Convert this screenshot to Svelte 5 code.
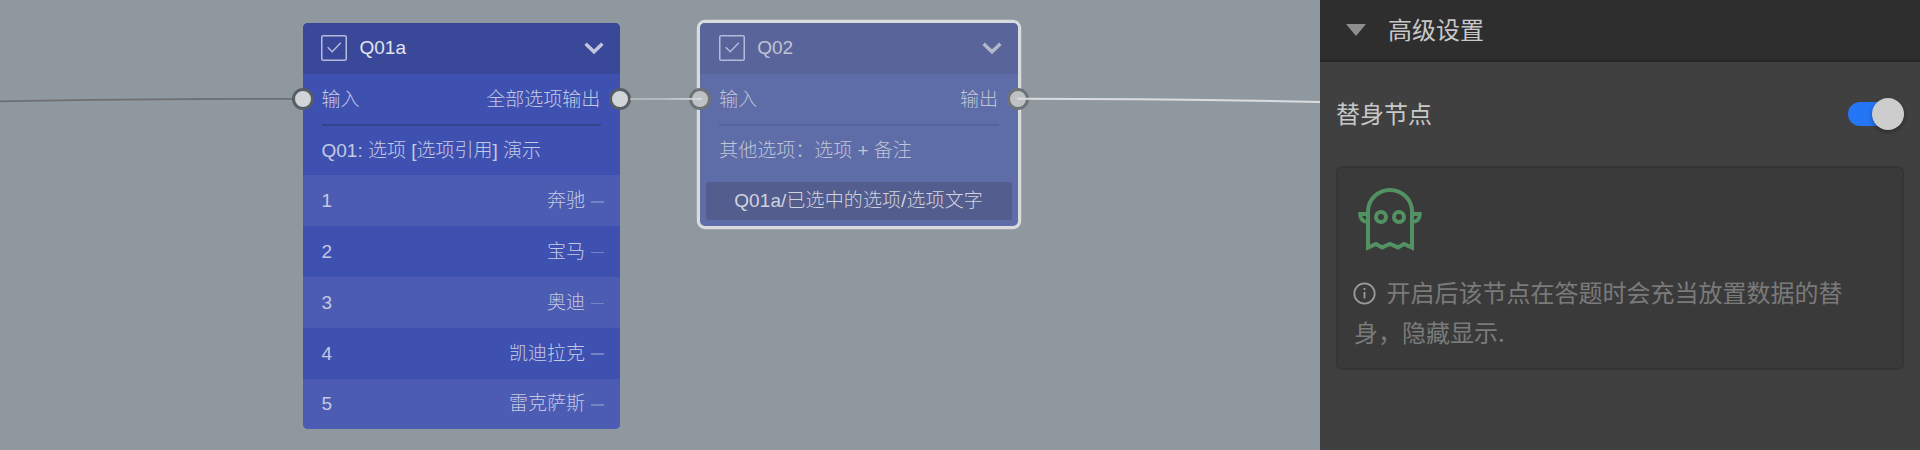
<script>
  const options = [
    ['1', '奔驰'],
    ['2', '宝马'],
    ['3', '奥迪'],
    ['4', '凯迪拉克'],
    ['5', '雷克萨斯'],
  ];
</script>

{#snippet head(title)}
  <header class="head">
    <svg class="check" width="26" height="26" viewBox="0 0 26 26" fill="none" stroke="currentColor">
      <rect x="0.75" y="0.75" width="24.5" height="24.5" rx="1.5" stroke-width="1.5" />
      <path d="M6.7 12.3l4.5 4.4 8.6-8.9" stroke-width="1.5" />
    </svg>
    <span class="title">{title}</span>
    <svg class="chevron" width="20" height="13" viewBox="0 0 20 13" fill="none" stroke="currentColor">
      <path d="M1.6 1.7l8.4 8.1 8.4-8.1" stroke-width="3.4" />
    </svg>
  </header>
{/snippet}

<main>
  <section class="canvas">
    <div class="node first">
      {@render head('Q01a')}
      <div class="io">
        <i class="port in"></i>
        <span>输入</span><span>全部选项输出</span>
        <i class="port out"></i>
      </div>
      <div class="row caption">Q01: 选项 [选项引用] 演示</div>
      {#each options as [number, label]}
        <div class="row option">
          <span>{number}</span>
          <span class="label">{label}</span>
          <i class="dash"></i>
        </div>
      {/each}
    </div>

    <div class="node second">
      {@render head('Q02')}
      <div class="io">
        <i class="port in"></i>
        <span>输入</span><span>输出</span>
        <i class="port out"></i>
      </div>
      <div class="row caption">其他选项：选项 + 备注</div>
      <div class="row chip-row"><span class="chip">Q01a/已选中的选项/选项文字</span></div>
    </div>

    <svg class="wires" width="1320" height="450" viewBox="0 0 1320 450" fill="none">
      <defs>
        <linearGradient id="link" gradientUnits="userSpaceOnUse" x1="631" y1="0" x2="700" y2="0">
          <stop offset="0" stop-color="#b5b8b9" />
          <stop offset="0.45" stop-color="#b9bcbd" />
          <stop offset="1" stop-color="#dadcde" />
        </linearGradient>
      </defs>
      <path d="M0 101.3C100 99.4 190 98.8 292 98.8" stroke="#6d6e6f" stroke-width="1.8" />
      <path d="M631 98.8L701 98.6L701 99L631 99.2Z" stroke="url(#link)" stroke-width="1.4" />
      <path d="M1017 98.8C1120 98.8 1220 100 1320 102" stroke="#dadcde" stroke-width="2" />
    </svg>
  </section>

  <aside>
    <div class="section">
      <svg width="20" height="12" viewBox="0 0 20 12"><path d="M0 0h20L10 12z" fill="#8f8f8f" /></svg>
      <span>高级设置</span>
    </div>
    <div class="setting">
      <span>替身节点</span>
      <div class="switch"><i></i></div>
    </div>
    <div class="hint">
      <svg class="ghost" width="64" height="64" viewBox="0 0 64 64" fill="none" stroke="#529162" stroke-width="4">
        <path d="M10 59.6V23.5a22 21.5 0 0 1 44 0V59.6L46 56 40 59.4 32 56 24 59.4 18 56Z" />
        <circle cx="23" cy="29" r="5" />
        <circle cx="41" cy="29" r="5" />
        <path d="M10 26H2.2c0 5 3 8 7.8 8M54 26h7.8c0 5-3 8-7.8 8" />
      </svg>
      <p>
        <svg class="info" width="23" height="23" viewBox="0 0 23 23" fill="none" stroke="currentColor" stroke-width="1.8">
          <circle cx="11.5" cy="11.5" r="10.2" />
          <path d="M11.5 10v6.5M11.5 6v2.1" />
        </svg>开启后该节点在答题时会充当放置数据的替身，隐藏显示.
      </p>
    </div>
  </aside>
</main>

<style>
  :global(body) {
    margin: 0;
    overflow: hidden;
  }

  main {
    display: flex;
    width: 1920px;
    height: 450px;
    overflow: hidden;
    font-family: 'Liberation Sans', 'Noto Sans CJK SC', sans-serif;
    font-weight: 300;
  }

  .canvas {
    position: relative;
    flex: 0 0 1320px;
    background: #90989f;
  }

  .wires {
    position: absolute;
    inset: 0;
  }

  .node {
    position: absolute;
    top: 23px;
    width: 317.3px;
    border-radius: 5px;
    font-size: 19px;
    line-height: 28px;
    white-space: nowrap;
  }

  .first {
    left: 302.7px;
    background: #3f51b0;
    color: #c3c9e3;
  }

  .second {
    left: 700.4px;
    height: 202.6px;
    background: #5e6ca8;
    color: #bfc4d6;
    box-shadow: 0 0 0 3.2px #d9dbdd;
  }

  .head,
  .io,
  .row {
    box-sizing: border-box;
    display: flex;
    align-items: center;
    height: 50.8px;
    padding: 0 19.8px 0 18.8px;
  }

  .io,
  .caption {
    padding-top: 2px;
  }

  .head {
    padding-right: 15.5px;
    border-radius: 5px 5px 0 0;
    background: #3a489a;
  }

  .second .head {
    background: #59649a;
  }

  .title {
    flex: 1;
    margin-left: 12px;
    color: #e2e4ef;
  }

  .second .title {
    color: #c0c4d2;
  }

  .chevron {
    margin-top: 1px;
    color: #c2c7df;
  }

  .second .chevron {
    color: #b3b8cb;
  }

  .check {
    color: #b4bbdc;
  }

  .io {
    position: relative;
    justify-content: space-between;
  }

  .io::after {
    content: '';
    position: absolute;
    left: 19px;
    right: 19px;
    bottom: -1px;
    height: 2px;
    background: #35428c;
  }

  .second .io::after {
    background: #566195;
  }

  .port {
    position: absolute;
    top: 14.3px;
    box-sizing: border-box;
    width: 22px;
    height: 22px;
    border: 3px solid #575d64;
    border-radius: 50%;
    background: #d2d5d8;
  }

  .second .port {
    border-color: #6d7277;
    background: #bec1c4;
  }

  .in {
    left: -11px;
  }

  .out {
    right: -11px;
  }

  .option:nth-child(even) {
    background: #4b5cb2;
  }

  .option:last-child {
    border-radius: 0 0 5px 5px;
  }

  .option {
    padding-top: 1px;
    padding-right: 15.5px;
  }

  .label {
    margin-left: auto;
  }

  .dash {
    width: 13px;
    height: 1.6px;
    margin: 1px 0 0 6.5px;
    background: #7683c5;
  }

  .chip-row {
    padding: 0 6px;
  }

  .chip {
    flex: 1;
    height: 38px;
    line-height: 38px;
    border-radius: 3px;
    background: #535d8e;
    color: #d0d3de;
    letter-spacing: 0.1px;
    text-align: center;
    text-indent: -1px;
  }

  aside {
    flex: 1;
    background: #404040;
    font-family: 'Noto Sans CJK SC', sans-serif;
    font-size: 24px;
    font-weight: 400;
    color: #c8c8c8;
  }

  .section {
    box-sizing: border-box;
    display: flex;
    align-items: center;
    gap: 22px;
    height: 62px;
    padding-left: 26px;
    border-bottom: 2px solid #272727;
    background: #2e2e2e;
  }

  .section span,
  .setting span {
    margin-top: -3px;
  }

  .setting {
    display: flex;
    align-items: center;
    justify-content: space-between;
    height: 104px;
    padding: 0 16px;
  }

  .switch {
    display: flex;
    align-items: center;
    justify-content: flex-end;
    width: 56px;
    height: 24px;
    border-radius: 12px;
    background: linear-gradient(90deg, #2575f7 46px, transparent 46px);
  }

  .switch i {
    width: 32px;
    height: 32px;
    border-radius: 50%;
    background: #cdcdcd;
    box-shadow: 0 2px 4px rgba(0, 0, 0, 0.35);
  }

  .hint {
    box-sizing: border-box;
    width: 568px;
    height: 204px;
    margin-left: 16px;
    padding: 20px 16px;
    border: 2px solid #353535;
    border-radius: 6px;
    background: #3a3a3a;
    color: #7a7a7a;
  }

  .ghost {
    display: block;
    margin-left: 4px;
  }

  p {
    margin: 20px 0 0;
    line-height: 40px;
  }

  .info {
    margin: 0 10.5px 0 -1px;
    vertical-align: -3px;
    color: #999;
  }
</style>
